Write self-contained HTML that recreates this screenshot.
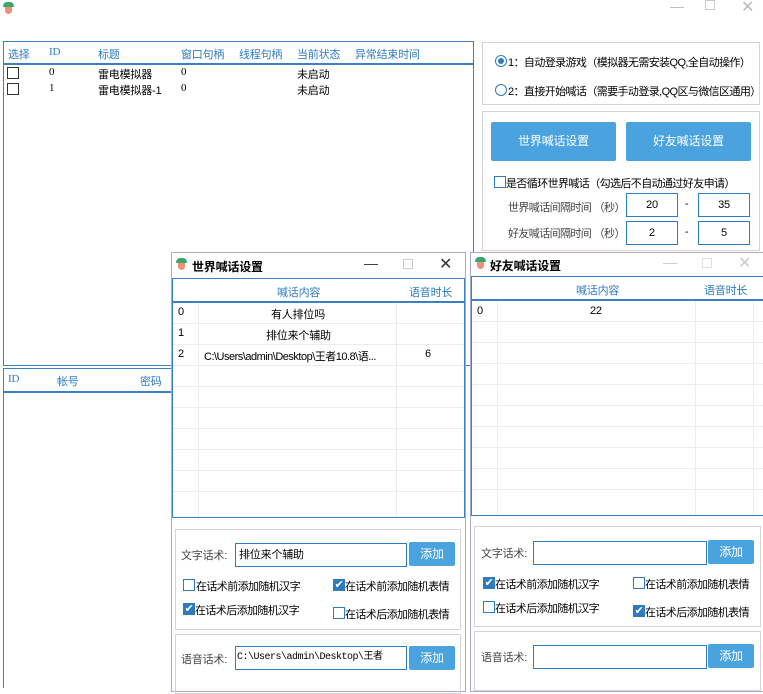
<!DOCTYPE html>
<html><head><meta charset="utf-8"><style>
*{box-sizing:border-box;margin:0;padding:0}
body{width:763px;height:683px;overflow:hidden;background:#fff;position:relative;font-family:"Liberation Sans","Noto Sans CJK SC",sans-serif;font-size:11px;letter-spacing:-0.2px;color:#000}
.a{position:absolute;white-space:nowrap}
.h{color:#2f7bc0}
.ico{position:absolute;width:11px;height:12px}
.ico:before{content:"";position:absolute;left:0;top:0;width:11px;height:5px;background:#3aa66a;border-radius:5px 5px 1px 1px}
.ico:after{content:"";position:absolute;left:2px;top:5px;width:7px;height:7px;background:#f0907a;border-radius:0 0 4px 4px}
.cb{position:absolute;width:12px;height:12px;border:1px solid #333;background:#fff}
.cbb{position:absolute;width:12px;height:12px;border:1px solid #2f7bc0;background:#fff}
.cbc{position:absolute;width:12px;height:12px;background:#2f7bc0;color:#fff;font-size:11px;line-height:12px;text-align:center}
.btn{position:absolute;background:#4aa3df;color:#fff;text-align:center;border-radius:2px;font-size:12px}
.inp{position:absolute;border:1px solid #2f7bc0;background:#fff;padding-left:3px}
.grp{position:absolute;border:1px solid #d4d4d4}
.hl{position:absolute;height:1px;background:#ececec}
.vl{position:absolute;width:1px;background:#ececec}
.ctl{position:absolute;color:#999;font-size:14px}
.r{font-size:11px;letter-spacing:-0.6px}
</style></head><body>
<div class="ico" style="left:3px;top:2px"></div>
<div class="ctl" style="left:670px;top:-2px;color:#bbb">—</div>
<div class="a" style="left:705px;top:0;width:10px;height:10px;border:1px solid #ccc"></div>
<div class="ctl" style="left:741px;top:-3px;color:#bbb;font-size:16px">✕</div>

<!-- left table -->
<div class="a" style="left:3px;top:41px;width:471px;height:325px;border:1px solid #3b7fc4"></div>
<div class="a" style="left:3px;top:63px;width:471px;height:2px;background:#3b7fc4"></div>
<div class="a h" style="left:8px;top:46px">选择</div>
<div class="a h" style="left:49px;top:46px;font-family:'Liberation Serif',serif">ID</div>
<div class="a h" style="left:98px;top:46px">标题</div>
<div class="a h" style="left:181px;top:46px">窗口句柄</div>
<div class="a h" style="left:239px;top:46px">线程句柄</div>
<div class="a h" style="left:297px;top:46px">当前状态</div>
<div class="a h" style="left:355px;top:46px">异常结束时间</div>
<div class="cb" style="left:7px;top:67px"></div>
<div class="cb" style="left:7px;top:83px"></div>
<div class="a" style="left:49px;top:66px;font-family:'Liberation Serif',serif">0</div>
<div class="a" style="left:49px;top:82px;font-family:'Liberation Serif',serif">1</div>
<div class="a" style="left:98px;top:66px">雷电模拟器</div>
<div class="a" style="left:98px;top:82px">雷电模拟器-1</div>
<div class="a" style="left:181px;top:66px;font-family:'Liberation Serif',serif">0</div>
<div class="a" style="left:181px;top:82px;font-family:'Liberation Serif',serif">0</div>
<div class="a" style="left:297px;top:66px">未启动</div>
<div class="a" style="left:297px;top:82px">未启动</div>

<!-- second table -->
<div class="a" style="left:3px;top:368px;width:180px;height:320px;border-left:1px solid #3b7fc4;border-top:1px solid #3b7fc4"></div>
<div class="a" style="left:3px;top:391px;width:180px;height:2px;background:#3b7fc4"></div>
<div class="a h" style="left:8px;top:373px;font-family:'Liberation Serif',serif">ID</div>
<div class="a h" style="left:57px;top:373px">帐号</div>
<div class="a h" style="left:140px;top:373px">密码</div>

<!-- right panel -->
<div class="grp" style="left:482px;top:42px;width:278px;height:63px"></div>
<div class="a" style="left:495px;top:55px;width:12px;height:12px;border:1px solid #2f7bc0;border-radius:50%;background:#fff"><div style="position:absolute;left:2px;top:2px;width:6px;height:6px;border-radius:50%;background:#2f7bc0"></div></div>
<div class="a r" style="left:508px;top:54px">1：自动登录游戏（模拟器无需安装QQ,全自动操作）</div>
<div class="a" style="left:495px;top:84px;width:12px;height:12px;border:1px solid #2f7bc0;border-radius:50%"></div>
<div class="a r" style="left:508px;top:83px">2：直接开始喊话（需要手动登录,QQ区与微信区通用）</div>
<div class="grp" style="left:482px;top:111px;width:278px;height:140px"></div>
<div class="btn" style="left:491px;top:122px;width:125px;height:39px;line-height:39px">世界喊话设置</div>
<div class="btn" style="left:626px;top:122px;width:125px;height:39px;line-height:39px">好友喊话设置</div>
<div class="cbb" style="left:494px;top:176px"></div>
<div class="a r" style="left:506px;top:175px">是否循环世界喊话（勾选后不自动通过好友申请）</div>
<div class="a r" style="left:508px;top:199px;color:#444">世界喊话间隔时间 （秒）</div>
<div class="a r" style="left:508px;top:225px;color:#444">好友喊话间隔时间 （秒）</div>
<div class="inp" style="left:626px;top:193px;width:52px;height:24px;text-align:center;line-height:22px;padding:0">20</div>
<div class="inp" style="left:698px;top:193px;width:52px;height:24px;text-align:center;line-height:22px;padding:0">35</div>
<div class="inp" style="left:626px;top:221px;width:52px;height:24px;text-align:center;line-height:22px;padding:0">2</div>
<div class="inp" style="left:698px;top:221px;width:52px;height:24px;text-align:center;line-height:22px;padding:0">5</div>
<div class="a" style="left:685px;top:198px">-</div>
<div class="a" style="left:685px;top:226px">-</div>

<!-- world dialog -->
<div class="a" style="left:171px;top:252px;width:295px;height:440px;border:1px solid #a9a9d6;background:#fff"></div>
<div class="ico" style="left:176px;top:258px"></div>
<div class="a" style="left:192px;top:258px;font-weight:bold;font-size:12px">世界喊话设置</div>
<div class="ctl" style="left:364px;top:255px;color:#333">—</div>
<div class="a" style="left:403px;top:259px;width:10px;height:10px;border:1px solid #ccc"></div>
<div class="ctl" style="left:439px;top:254px;color:#333;font-size:16px">✕</div>
<div class="a" style="left:172px;top:278px;width:293px;height:240px;border:1px solid #3b7fc4"></div>
<div class="a" style="left:172px;top:301px;width:293px;height:2px;background:#3b7fc4"></div>
<div class="a h" style="left:277px;top:284px">喊话内容</div>
<div class="a h" style="left:409px;top:284px">语音时长</div>
<div class="vl" style="left:198px;top:303px;height:214px"></div>
<div class="vl" style="left:396px;top:303px;height:214px"></div>
<div class="hl" style="left:173px;top:323px;width:291px"></div>
<div class="hl" style="left:173px;top:344px;width:291px"></div>
<div class="hl" style="left:173px;top:365px;width:291px"></div>
<div class="hl" style="left:173px;top:386px;width:291px"></div>
<div class="hl" style="left:173px;top:407px;width:291px"></div>
<div class="hl" style="left:173px;top:428px;width:291px"></div>
<div class="hl" style="left:173px;top:449px;width:291px"></div>
<div class="hl" style="left:173px;top:470px;width:291px"></div>
<div class="hl" style="left:173px;top:491px;width:291px"></div>
<div class="a" style="left:178px;top:306px">0</div>
<div class="a" style="left:178px;top:327px">1</div>
<div class="a" style="left:178px;top:348px">2</div>
<div class="a" style="left:271px;top:306px">有人排位吗</div>
<div class="a" style="left:266px;top:327px">排位来个辅助</div>
<div class="a" style="left:204px;top:348px;letter-spacing:-0.5px">C:\Users\admin\Desktop\王者10.8\语...</div>
<div class="a" style="left:425px;top:348px">6</div>
<div class="grp" style="left:175px;top:529px;width:286px;height:101px"></div>
<div class="a" style="left:181px;top:547px;color:#444">文字话术:</div>
<div class="inp" style="left:235px;top:543px;width:172px;height:24px;line-height:22px">排位来个辅助</div>
<div class="btn" style="left:409px;top:542px;width:46px;height:24px;line-height:24px">添加</div>
<div class="cbb" style="left:183px;top:579px"></div><div class="a r" style="left:196px;top:578px">在话术前添加随机汉字</div>
<div class="cbc" style="left:333px;top:579px">✔</div><div class="a r" style="left:345px;top:578px">在话术前添加随机表情</div>
<div class="cbc" style="left:183px;top:603px">✔</div><div class="a r" style="left:195px;top:602px">在话术后添加随机汉字</div>
<div class="cbb" style="left:333px;top:607px"></div><div class="a r" style="left:345px;top:606px">在话术后添加随机表情</div>
<div class="grp" style="left:175px;top:634px;width:286px;height:60px"></div>
<div class="a" style="left:181px;top:651px;color:#444">语音话术:</div>
<div class="inp" style="left:235px;top:646px;width:172px;height:24px;line-height:22px;overflow:hidden;font-family:'Liberation Mono','Noto Sans CJK SC',monospace;font-size:10px;letter-spacing:-0.5px;padding-left:1px">C:\Users\admin\Desktop\王者10.8\语音</div>
<div class="btn" style="left:409px;top:646px;width:46px;height:24px;line-height:24px">添加</div>

<!-- friend dialog -->
<div class="a" style="left:470px;top:252px;width:293px;height:440px;border:1px solid #a9a9d6;border-right:none;background:#fff"></div>
<div class="ico" style="left:475px;top:257px"></div>
<div class="a" style="left:490px;top:257px;font-weight:bold;font-size:12px">好友喊话设置</div>
<div class="ctl" style="left:663px;top:254px;color:#ccc">—</div>
<div class="a" style="left:702px;top:258px;width:10px;height:10px;border:1px solid #ddd"></div>
<div class="ctl" style="left:738px;top:253px;color:#ccc;font-size:16px">✕</div>
<div class="a" style="left:471px;top:276px;width:292px;height:240px;border:1px solid #3b7fc4;border-right:none"></div>
<div class="a" style="left:471px;top:299px;width:292px;height:2px;background:#3b7fc4"></div>
<div class="a h" style="left:576px;top:282px">喊话内容</div>
<div class="a h" style="left:704px;top:282px">语音时长</div>
<div class="vl" style="left:497px;top:301px;height:214px"></div>
<div class="vl" style="left:695px;top:301px;height:214px"></div>
<div class="vl" style="left:753px;top:301px;height:214px"></div>
<div class="hl" style="left:472px;top:321px;width:291px"></div>
<div class="hl" style="left:472px;top:342px;width:291px"></div>
<div class="hl" style="left:472px;top:363px;width:291px"></div>
<div class="hl" style="left:472px;top:384px;width:291px"></div>
<div class="hl" style="left:472px;top:405px;width:291px"></div>
<div class="hl" style="left:472px;top:426px;width:291px"></div>
<div class="hl" style="left:472px;top:447px;width:291px"></div>
<div class="hl" style="left:472px;top:468px;width:291px"></div>
<div class="hl" style="left:472px;top:489px;width:291px"></div>
<div class="a" style="left:477px;top:305px">0</div>
<div class="a" style="left:590px;top:305px">22</div>
<div class="grp" style="left:474px;top:526px;width:287px;height:101px"></div>
<div class="a" style="left:481px;top:545px;color:#444">文字话术:</div>
<div class="inp" style="left:533px;top:541px;width:174px;height:24px"></div>
<div class="btn" style="left:708px;top:540px;width:46px;height:24px;line-height:24px">添加</div>
<div class="cbc" style="left:483px;top:577px">✔</div><div class="a r" style="left:495px;top:576px">在话术前添加随机汉字</div>
<div class="cbb" style="left:633px;top:577px"></div><div class="a r" style="left:645px;top:576px">在话术前添加随机表情</div>
<div class="cbb" style="left:483px;top:601px"></div><div class="a r" style="left:495px;top:600px">在话术后添加随机汉字</div>
<div class="cbc" style="left:633px;top:605px">✔</div><div class="a r" style="left:645px;top:604px">在话术后添加随机表情</div>
<div class="grp" style="left:474px;top:631px;width:287px;height:60px"></div>
<div class="a" style="left:481px;top:649px;color:#444">语音话术:</div>
<div class="inp" style="left:533px;top:645px;width:174px;height:24px"></div>
<div class="btn" style="left:708px;top:644px;width:46px;height:24px;line-height:24px">添加</div>
</body></html>
